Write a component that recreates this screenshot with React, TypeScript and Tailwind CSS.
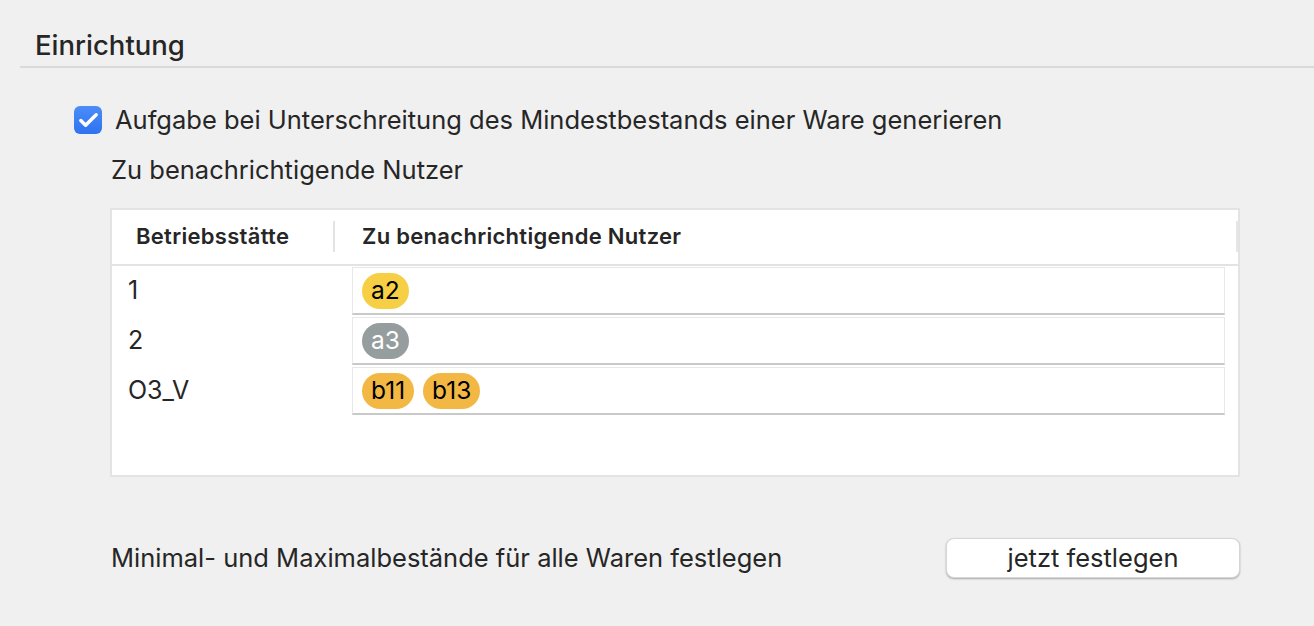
import { Check } from "lucide-react";

const rows = [
  { site: "1", users: [{ name: "a2", cls: "bg-[#f7cf45] text-black" }] },
  { site: "2", users: [{ name: "a3", cls: "bg-[#959d9e] text-white" }] },
  {
    site: "O3_V",
    users: [
      { name: "b11", cls: "bg-[#f3b843] text-black" },
      { name: "b13", cls: "bg-[#f3b843] text-black" },
    ],
  },
];

export default function App() {
  return (
    <div className="h-[626px] w-[1314px] overflow-hidden bg-[#f0f0f0] font-['Inter','Liberation_Sans',sans-serif] text-[#262626]">
      <div className="ml-[20px] border-b-2 border-[#dadada] pl-[15px] pt-[28px] pb-[4px]">
        <h2 className="text-[27.5px] leading-[34px] font-medium">Einrichtung</h2>
      </div>

      <div className="ml-[74px] mt-[38px] flex h-[28px] items-center gap-[13px]">
        <span className="flex h-[28px] w-[28px] items-center justify-center rounded-[6px] bg-gradient-to-b from-[#4a8cf8] to-[#2f73f0]">
          <Check className="h-[23px] w-[23px] text-white" strokeWidth={3.6} />
        </span>
        <span className="text-[25.5px] leading-[30px]">
          Aufgabe bei Unterschreitung des Mindestbestands einer Ware generieren
        </span>
      </div>

      <p className="ml-[111px] mt-[21px] text-[25.5px] leading-[30px]">Zu benachrichtigende Nutzer</p>

      <div className="ml-[110px] mt-[23px] h-[269px] w-[1130px] border-2 border-[#e3e3e3] bg-white">
        <div className="flex h-[56px] items-center border-b-2 border-[#e3e3e3] pb-[2px]">
          <div className="w-[221px] pl-[24px] text-[22px] font-semibold tracking-[0.3px]">Betriebsstätte</div>
          <div className="h-[31px] w-[2px] bg-[#e3e3e3]" />
          <div className="flex-1 pl-[27px] text-[22px] font-semibold tracking-[0.3px]">Zu benachrichtigende Nutzer</div>
          <div className="h-[31px] w-[2px] bg-[#e6e6e6]" />
        </div>
        {rows.map((r) => (
          <div key={r.site} className="flex h-[50px] items-center">
            <div className="w-[240px] pl-[16px] text-[25px]">{r.site}</div>
            <div className="flex h-[48px] w-[873px] items-center gap-[9px] border border-[#e8e8e8] border-b-2 border-b-[#c9c9c9] pl-[9px]">
              {r.users.map((u) => (
                <span
                  key={u.name}
                  className={`flex h-[36px] items-center rounded-full px-[9px] text-[24.5px] leading-none ${u.cls}`}
                >
                  {u.name}
                </span>
              ))}
            </div>
          </div>
        ))}
      </div>

      <div className="ml-[111px] mt-[61px] flex h-[40px] w-[1129px] items-center justify-between">
        <span className="text-[25.5px]">Minimal- und Maximalbestände für alle Waren festlegen</span>
        <button className="h-[40px] w-[294px] rounded-[8px] border border-[#d6d6d6] bg-white text-[25.5px] shadow-[0_1px_2px_rgba(0,0,0,0.3)]">
          jetzt festlegen
        </button>
      </div>
    </div>
  );
}
